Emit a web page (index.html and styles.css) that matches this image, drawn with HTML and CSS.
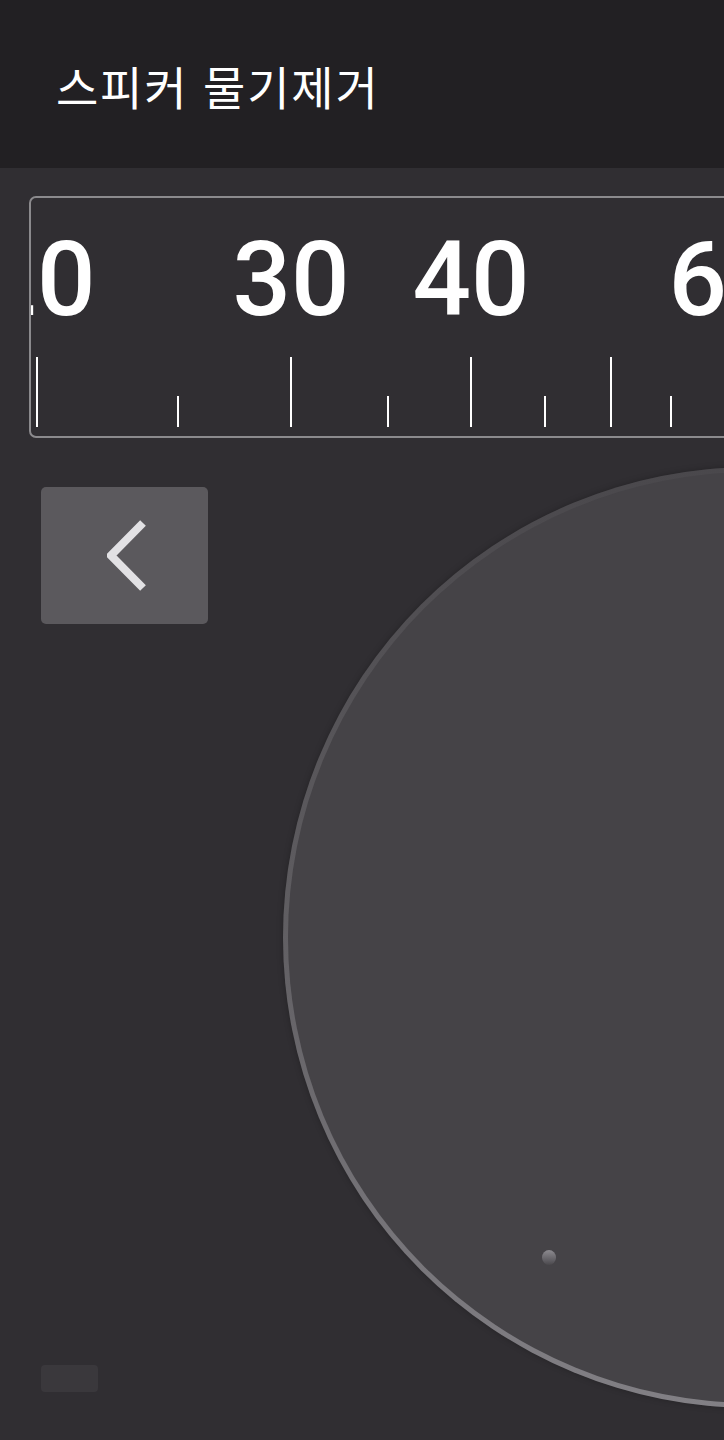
FILE: index.html
```html
<!DOCTYPE html>
<html lang="ko">
<head>
  <meta charset="UTF-8" />
  <meta name="viewport" content="width=device-width, initial-scale=1.0" />
  <title>스피커 물기제거</title>
  <link rel="stylesheet" href="styles.css">
</head>
<body>

  <header class="app-bar">
    <h1>스피커 물기제거</h1>
  </header>

  <main class="content">
    <div class="ruler">
      <span class="ruler-label" style="left: 6px">20</span>
      <span class="ruler-label" style="left: 260px">30</span>
      <span class="ruler-label" style="left: 440px">40</span>
      <span class="ruler-label" style="left: 696px">60</span>

      <span class="tick major" style="left: 5px"></span>
      <span class="tick" style="left: 146px"></span>
      <span class="tick major" style="left: 259px"></span>
      <span class="tick" style="left: 356px"></span>
      <span class="tick major" style="left: 439px"></span>
      <span class="tick" style="left: 513px"></span>
      <span class="tick major" style="left: 579px"></span>
      <span class="tick" style="left: 639px"></span>
    </div>

    <div class="controls">
      <div class="side">
        <button class="back-btn" aria-label="back">
          <svg width="40" height="72" viewBox="0 0 40 72">
            <polyline points="36,3 4,35.5 36,68" fill="none" stroke="#e2e1e4" stroke-width="8" />
          </svg>
        </button>
        <div class="mini-btn"></div>
      </div>

      <div class="dial">
        <div class="dial-face">
          <span class="dial-dot"></span>
        </div>
      </div>
    </div>
  </main>

</body>
</html>
```

FILE: styles.css
```css
:root {
  --bar-bg: #222023;
  --bg: #302e32;
  --ruler-border: #8b8a8d;
  --button-bg: #5b595d;
  --dial-bg: #454347;
}

html, body {
  margin: 0;
  padding: 0;
}

body {
  background-color: var(--bg);
  color: #fff;
  font-family: "Noto Sans CJK KR", "Noto Sans", sans-serif;
  overflow: hidden;
  width: 724px;
  height: 1440px;
}

.app-bar {
  height: 168px;
  background-color: var(--bar-bg);
  display: flex;
  align-items: center;
  padding-left: 56px;
  box-sizing: border-box;
}

.app-bar h1 {
  margin: 0;
  font-size: 46px;
  font-weight: 400;
  letter-spacing: 1.8px;
  line-height: 1;
  padding-top: 2px;
}

.content {
  padding: 29px 0 0 29px;
}

/* frequency scale */
.ruler {
  position: relative;
  width: 760px;
  height: 242px;
  border: 2px solid var(--ruler-border);
  border-radius: 7px;
  box-sizing: border-box;
  overflow: hidden;
  margin-top: -1px;
}

.ruler-label {
  position: absolute;
  top: 30px;
  transform: translateX(-50%);
  font-family: Roboto, "Noto Sans", sans-serif;
  font-size: 103px;
  font-weight: 500;
  line-height: 1;
  color: #fff;
}

.tick {
  position: absolute;
  bottom: 9px;
  width: 2px;
  height: 31px;
  background-color: #fff;
}

.tick.major {
  height: 70px;
}

.controls {
  display: flex;
  margin-top: 29px;
}

.side {
  display: flex;
  flex-direction: column;
  justify-content: space-between;
  padding: 20px 0 16px 12px;
  width: 167px;
  flex-shrink: 0;
}

.back-btn {
  width: 167px;
  height: 137px;
  border: none;
  border-radius: 5px;
  background-color: var(--button-bg);
  display: flex;
  align-items: center;
  justify-content: center;
  padding: 0 0 0 4px;
  cursor: pointer;
}

.mini-btn {
  width: 57px;
  height: 27px;
  border-radius: 4px;
  background-color: #3a383c;
}

.dial {
  flex-shrink: 0;
  width: 941px;
  height: 941px;
  margin-left: 75px;
  border-radius: 50%;
  padding: 5px;
  box-sizing: border-box;
  background: linear-gradient(to bottom, #4a484c 0%, #5e5c60 45%, #828085 100%);
  box-shadow: 0 0 6px rgba(0, 0, 0, 0.25);
}

.dial-face {
  position: relative;
  width: 100%;
  height: 100%;
  border-radius: 50%;
  background-color: var(--dial-bg);
}

.dial-dot {
  position: absolute;
  left: 254px;
  top: 778px;
  width: 14px;
  height: 15px;
  border-radius: 50%;
  background: linear-gradient(to bottom, #8d8b90, #5f5d62 70%, #4a484c);
}
```
